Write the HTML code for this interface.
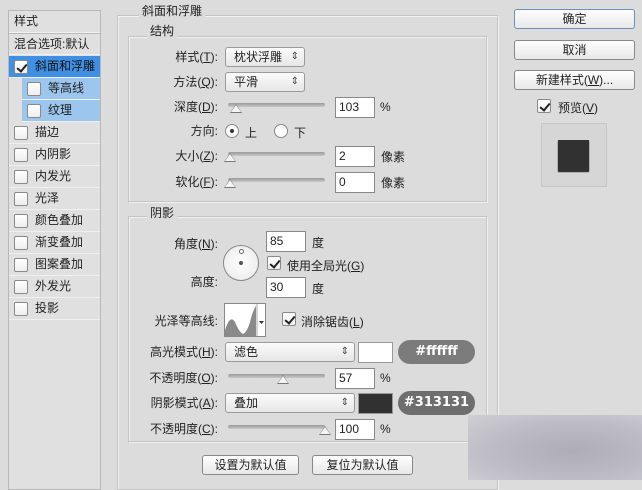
<!DOCTYPE html>
<html><head><meta charset="utf-8"><style>
*{box-sizing:border-box;margin:0;padding:0}
body{width:642px;height:480px;background:#dcdcdc;font-family:"Liberation Sans","Noto Sans CJK SC",sans-serif;font-size:12px;color:#222;position:relative;overflow:hidden}
.a{position:absolute}
.lbl{position:absolute;text-align:right;width:110px;line-height:14px}
.cb{position:absolute;width:14px;height:14px;border:1px solid #8a8a8a;border-radius:2px;background:linear-gradient(#fff,#eee)}
.cb.on::after{content:"";position:absolute;left:4px;top:1px;width:4px;height:8px;border-right:2px solid #222;border-bottom:2px solid #222;transform:rotate(40deg)}
.row{position:absolute;left:9px;width:91px;height:22px;border-bottom:1px solid #f0f0f0;line-height:21px}
.row .cb{left:5px;top:4px}
.row span{position:absolute;left:26px}
.sel{position:absolute;height:20px;border:1px solid #9a9a9a;border-radius:3px;background:linear-gradient(#fbfbfb,#e6e6e6);padding-left:8px;line-height:18px}
.sel::after{content:"⇕";position:absolute;right:5px;top:0;font-size:10px;color:#444}
.inp{position:absolute;width:40px;height:21px;border:1px solid #888;background:#fff;padding-left:3px;line-height:19px}
.sl{position:absolute;width:97px;height:4px;border-radius:2px;background:linear-gradient(#9a9a9a,#c8c8c8)}
.th{position:absolute;top:0px;width:0;height:0;border-left:6px solid transparent;border-right:6px solid transparent;border-bottom:9px solid #777}
.th::after{content:"";position:absolute;left:-5px;top:1px;border-left:5px solid transparent;border-right:5px solid transparent;border-bottom:7px solid #f4f4f4}
.btn{position:absolute;height:20px;border:1px solid #888;border-radius:3px;background:linear-gradient(#fefefe,#e8e8e8);text-align:center;line-height:18px}
.grp{position:absolute;border:1px solid #c4c4c4;box-shadow:1px 1px 0 #f2f2f2 inset,1px 1px 0 #f2f2f2}
.ttl{position:absolute;background:#dcdcdc;padding:0 3px;line-height:14px}
.pill{position:absolute;height:24px;border-radius:12px;color:#fff;font-size:13px;font-weight:bold;text-align:center;line-height:24px;font-family:"DejaVu Sans",sans-serif}
</style></head><body>
<div class="a" style="left:8px;top:10px;width:93px;height:480px;border:1px solid #b8b8b8;background:#e0e0e0"></div>
<div class="row" style="top:11px"><span style="left:5px">样式</span></div>
<div class="row" style="top:33px;border-top:1px solid #bbb"><span style="left:5px">混合选项:默认</span></div>
<div class="row" style="top:56px;background:#3f8fe2;color:#111"><div class="cb on"></div><span>斜面和浮雕</span></div>
<div class="row" style="top:78px;left:22px;width:78px;background:#9cc6ee"><div class="cb"></div><span>等高线</span></div>
<div class="row" style="top:100px;left:22px;width:78px;background:#9cc6ee"><div class="cb"></div><span>纹理</span></div>
<div class="row" style="top:122px"><div class="cb"></div><span>描边</span></div>
<div class="row" style="top:144px"><div class="cb"></div><span>内阴影</span></div>
<div class="row" style="top:166px"><div class="cb"></div><span>内发光</span></div>
<div class="row" style="top:188px"><div class="cb"></div><span>光泽</span></div>
<div class="row" style="top:210px"><div class="cb"></div><span>颜色叠加</span></div>
<div class="row" style="top:232px"><div class="cb"></div><span>渐变叠加</span></div>
<div class="row" style="top:254px"><div class="cb"></div><span>图案叠加</span></div>
<div class="row" style="top:276px"><div class="cb"></div><span>外发光</span></div>
<div class="row" style="top:298px"><div class="cb"></div><span>投影</span></div>

<div class="grp" style="left:117px;top:15px;width:381px;height:475px"></div>
<div class="ttl" style="left:139px;top:4px">斜面和浮雕</div>
<div class="grp" style="left:128px;top:36px;width:359px;height:166px"></div>
<div class="ttl" style="left:147px;top:24px">结构</div>
<div class="lbl" style="left:108px;top:50px">样式(<u>T</u>):</div>
<div class="sel" style="left:225px;top:47px;width:80px">枕状浮雕</div>
<div class="lbl" style="left:108px;top:75px">方法(<u>Q</u>):</div>
<div class="sel" style="left:225px;top:72px;width:80px">平滑</div>
<div class="lbl" style="left:108px;top:100px">深度(<u>D</u>):</div>
<div class="sl" style="left:228px;top:103px"><div class="th" style="left:2px;top:1px"></div></div>
<div class="inp" style="left:335px;top:97px">103</div><div class="a" style="left:380px;top:100px">%</div>
<div class="lbl" style="left:108px;top:124px">方向:</div>
<div class="a" style="left:225px;top:124px;width:14px;height:14px;border:1px solid #888;border-radius:50%;background:#fff"><div class="a" style="left:4px;top:4px;width:4px;height:4px;border-radius:50%;background:#333"></div></div>
<div class="a" style="left:245px;top:124px">上</div>
<div class="a" style="left:274px;top:124px;width:14px;height:14px;border:1px solid #888;border-radius:50%;background:#fff"></div>
<div class="a" style="left:294px;top:124px">下</div>
<div class="lbl" style="left:108px;top:149px">大小(<u>Z</u>):</div>
<div class="sl" style="left:228px;top:152px"><div class="th" style="left:-4px;top:1px"></div></div>
<div class="inp" style="left:335px;top:146px">2</div><div class="a" style="left:381px;top:148px">像素</div>
<div class="lbl" style="left:108px;top:175px">软化(<u>F</u>):</div>
<div class="sl" style="left:228px;top:178px"><div class="th" style="left:-4px;top:1px"></div></div>
<div class="inp" style="left:335px;top:172px">0</div><div class="a" style="left:381px;top:174px">像素</div>

<div class="grp" style="left:128px;top:216px;width:359px;height:226px"></div>
<div class="ttl" style="left:147px;top:206px">阴影</div>
<div class="lbl" style="left:108px;top:237px">角度(<u>N</u>):</div>
<div class="a" style="left:223px;top:245px;width:36px;height:36px;border:1px solid #888;border-radius:50%;background:radial-gradient(#fff,#e8e8e8)"><div class="a" style="left:15px;top:15px;width:4px;height:4px;border-radius:50%;background:#555"></div><div class="a" style="left:15px;top:3px;width:5px;height:5px;border-radius:50%;border:1px solid #666;background:#fff"></div></div>
<div class="inp" style="left:266px;top:231px">85</div><div class="a" style="left:312px;top:234px">度</div>
<div class="cb on" style="left:267px;top:256px"></div><div class="a" style="left:287px;top:257px">使用全局光(<u>G</u>)</div>
<div class="lbl" style="left:108px;top:275px">高度:</div>
<div class="inp" style="left:266px;top:277px">30</div><div class="a" style="left:312px;top:280px">度</div>
<div class="lbl" style="left:108px;top:314px">光泽等高线:</div>
<div class="a" style="left:224px;top:303px;width:42px;height:34px;border:1px solid #888;background:#fff;overflow:hidden">
<svg width="42" height="34"><path d="M0 34 L0 26 Q5 10 10 18 Q14 28 18 30 Q22 28 25 18 Q28 6 31 2 L31 34Z" fill="#8a8a8a"/><line x1="32" y1="0" x2="32" y2="34" stroke="#aaa"/><path d="M34 17 L39 17 L36.5 20Z" fill="#333"/></svg></div>
<div class="cb on" style="left:282px;top:312px"></div><div class="a" style="left:301px;top:313px">消除锯齿(<u>L</u>)</div>
<div class="lbl" style="left:108px;top:345px">高光模式(<u>H</u>):</div>
<div class="sel" style="left:225px;top:342px;width:130px">滤色</div>
<div class="a" style="left:358px;top:342px;width:35px;height:21px;border:1px solid #999;background:#fff"></div>
<div class="pill" style="left:398px;top:340px;width:77px;background:#7b7b7b">#ffffff</div>
<div class="lbl" style="left:108px;top:371px">不透明度(<u>O</u>):</div>
<div class="sl" style="left:228px;top:374px"><div class="th" style="left:49px;top:1px"></div></div>
<div class="inp" style="left:335px;top:368px">57</div><div class="a" style="left:380px;top:371px">%</div>
<div class="lbl" style="left:108px;top:396px">阴影模式(<u>A</u>):</div>
<div class="sel" style="left:225px;top:393px;width:130px">叠加</div>
<div class="a" style="left:358px;top:393px;width:35px;height:21px;border:1px solid #999;background:#313131"></div>
<div class="pill" style="left:398px;top:391px;width:77px;background:#6e6e6e">#313131</div>
<div class="lbl" style="left:108px;top:422px">不透明度(<u>C</u>):</div>
<div class="sl" style="left:228px;top:425px"><div class="th" style="left:91px;top:1px"></div></div>
<div class="inp" style="left:335px;top:419px">100</div><div class="a" style="left:380px;top:422px">%</div>
<div class="btn" style="left:202px;top:455px;width:97px">设置为默认值</div>
<div class="btn" style="left:312px;top:455px;width:101px">复位为默认值</div>

<div class="btn" style="left:514px;top:9px;width:121px;border-color:#6d8fc0">确定</div>
<div class="btn" style="left:514px;top:40px;width:121px">取消</div>
<div class="btn" style="left:514px;top:70px;width:121px">新建样式(<u>W</u>)...</div>
<div class="cb on" style="left:537px;top:99px"></div><div class="a" style="left:558px;top:99px">预览(<u>V</u>)</div>
<div class="a" style="left:541px;top:123px;width:66px;height:64px;border:1px solid #c6c6c6;background:#d6d6d6"></div>
<div class="a" style="left:558px;top:140px;width:31px;height:31px;background:#313131;box-shadow:0 1px 1px #111"></div>

<div class="a" style="left:468px;top:415px;width:174px;height:65px;background:radial-gradient(ellipse at 60% 55%,#aeacb6,#bdbcc5 55%,#cfcfd3)"></div>
</body></html>
